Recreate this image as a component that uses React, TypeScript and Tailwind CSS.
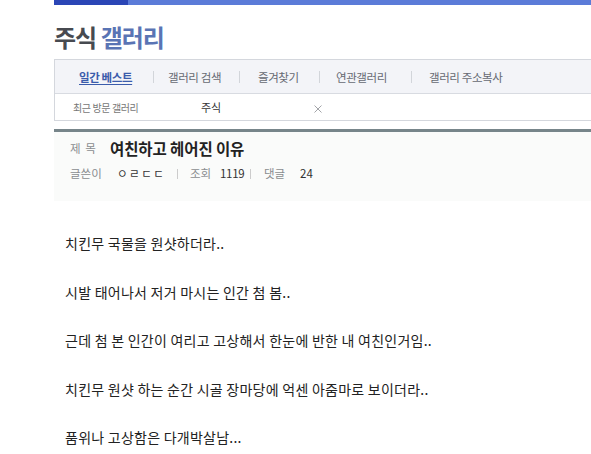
const navItems = [
  { label: "일간 베스트", w: "w-[98px]", pl: "pl-[24px]", active: true },
  { label: "갤러리 검색", w: "w-[86px]", pl: "pl-[14px]", active: false },
  { label: "즐겨찾기", w: "w-[80px]", pl: "pl-[18px]", active: false },
  { label: "연관갤러리", w: "w-[92px]", pl: "pl-[16px]", active: false },
  { label: "갤러리 주소복사", w: "w-[130px]", pl: "pl-[17px]", active: false },
];

const lines = [
  "치킨무 국물을 원샷하더라..",
  "시발 태어나서 저거 마시는 인간 첨 봄..",
  "근데 첨 본 인간이 여리고 고상해서 한눈에 반한 내 여친인거임..",
  "치킨무 원샷 하는 순간 시골 장마당에 억센 아줌마로 보이더라..",
  "품위나 고상함은 다개박살남...",
];

export default function App() {
  return (
    <div className="w-[591px] h-[454px] overflow-hidden bg-white font-['Noto_Sans_CJK_KR',sans-serif]">
      {/* top strip */}
      <div className="flex h-[5px] pl-[54px]">
        <div className="w-[74px] bg-[#2b46b6]" />
        <div className="flex-1 bg-[#5b7bd8]" />
      </div>

      <div className="pl-[54px]">
        <h1 className="mt-[20px] h-[34px] text-[24px] leading-none font-bold tracking-[-1px]">
          <span className="text-[#474a50]">주식</span>{" "}
          <span className="text-[#5a74b4]">갤러리</span>
        </h1>

        {/* nav box */}
        <div className="border-l border-t border-b border-[#d4d7dd]">
          <div className="flex items-center h-[34px] bg-[#f3f4f8] border-b border-[#d8dbe1]">
            {navItems.map((it, i) => (
              <div key={it.label} className={`flex items-center h-full ${it.w}`}>
                {i > 0 && <span className="w-px h-[12px] bg-[#d2d5da]" />}
                <span
                  className={`${it.pl} mt-[2px] text-[11.5px] tracking-[-0.4px] whitespace-nowrap ${
                    it.active ? "font-bold text-[#3b5cab] underline underline-offset-2" : "text-[#666a72]"
                  }`}
                >
                  {it.label}
                </span>
              </div>
            ))}
          </div>
          <div className="flex items-center h-[26px] bg-white">
            <span className="pl-[18px] w-[146px] text-[10px] tracking-[-0.4px] text-[#777]">최근 방문 갤러리</span>
            <span className="w-[113px] text-[11px] text-[#333]">주식</span>
            <svg width="8" height="8" viewBox="0 0 8 8" className="mt-[3px]">
              <path d="M0.5 0.5 L7.5 7.5 M7.5 0.5 L0.5 7.5" stroke="#8a8d92" strokeWidth="0.8" fill="none" />
            </svg>
          </div>
        </div>

        {/* post header */}
        <div className="mt-[8px] h-[3px] bg-[#77858a]" />
        <div className="h-[69px] bg-[#fafbfa] pl-[16px] pt-[7px]">
          <div className="flex items-center h-[20px]">
            <span className="w-[40px] text-[11.5px] text-[#8a8d90] tracking-[1px]">제 목</span>
            <span className="text-[15.5px] font-bold text-[#222] tracking-[-0.1px]">여친하고 헤어진 이유</span>
          </div>
          <div className="flex items-center h-[20px] mt-[5px] text-[11.5px]">
            <span className="w-[47px] text-[#8a8d90]">글쓴이</span>
            <span className="w-[60px] text-[#333] tracking-[1.5px]">ㅇㄹㄷㄷ</span>
            <span className="w-px h-[10px] bg-[#ccc]" />
            <span className="ml-[12px] w-[30px] text-[#8a8d90]">조회</span>
            <span className="w-[30px] text-[#333] tracking-[-0.3px]">1119</span>
            <span className="w-px h-[10px] bg-[#ccc]" />
            <span className="ml-[13px] w-[36px] text-[#8a8d90]">댓글</span>
            <span className="text-[#333]">24</span>
          </div>
        </div>

        {/* body */}
        <div className="pl-[11px] pt-[18px] text-[14px] tracking-[0.25px] text-[#222]">
          {lines.map((l) => (
            <p key={l} className="h-[48.5px] leading-[48.5px] whitespace-nowrap">
              {l}
            </p>
          ))}
        </div>
      </div>
    </div>
  );
}
